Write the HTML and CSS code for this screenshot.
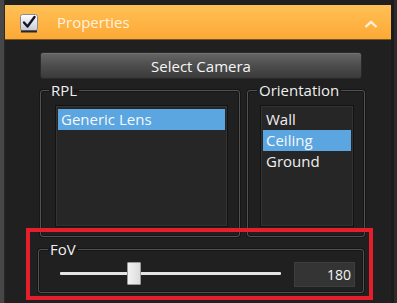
FILE: index.html
```html
<!DOCTYPE html>
<html>
<head>
<meta charset="utf-8">
<link rel="stylesheet" href="styles.css">
</head>
<body>
<div class="root">
  <div class="edge-left"></div>
  <div class="panel">
    <div class="header">
      <svg class="check" width="18" height="19" viewBox="0 0 18 19">
        <defs>
          <linearGradient id="cb" x1="0" y1="0" x2="0" y2="1">
            <stop offset="0" stop-color="#ffffff"/>
            <stop offset="1" stop-color="#c9c9d2"/>
          </linearGradient>
        </defs>
        <rect x="0.5" y="0.5" width="17" height="16" rx="2" fill="url(#cb)" stroke="#8a8a96" stroke-width="1"/>
        <rect x="1" y="16.5" width="16" height="2" fill="#2a2430"/>
        <path d="M4 8.5 L7.5 12.5 L14.5 3" fill="none" stroke="#15142a" stroke-width="2.4" stroke-linecap="round" stroke-linejoin="round"/>
      </svg>
      <span class="title">Properties</span>
      <svg class="chevron" width="14" height="8" viewBox="0 0 14 8">
        <polyline points="1.5,7 7,1.8 12.5,7" fill="none" stroke="rgba(255,255,255,0.8)" stroke-width="2.4" stroke-linejoin="round"/>
      </svg>
    </div>
    <div class="content">
      <button class="btn">Select Camera</button>
      <div class="groups">
        <fieldset class="group rpl">
          <legend>RPL</legend>
          <div class="list">
            <div class="item sel">Generic Lens</div>
          </div>
        </fieldset>
        <fieldset class="group orient">
          <legend>Orientation</legend>
          <div class="list">
            <div class="item">Wall</div>
            <div class="item sel">Ceiling</div>
            <div class="item">Ground</div>
          </div>
        </fieldset>
      </div>
      <fieldset class="group fov">
        <legend>FoV</legend>
        <div class="fov-row">
          <div class="slider">
            <div class="track"></div>
            <div class="thumb"></div>
          </div>
          <div class="value">180</div>
        </div>
      </fieldset>
    </div>
  </div>
  <div class="edge-right"></div>
  <div class="highlight"></div>
</div>
</body>
</html>
```

FILE: styles.css
```css
html, body {
  margin: 0;
  padding: 0;
  background: #1f1f1f;
}

.root {
  position: relative;
  display: flex;
  width: 397px;
  height: 303px;
  overflow: hidden;
  font-family: "Open Sans", "Noto Sans", sans-serif;
  font-size: 15px;
  color: #f0f0f0;
}

.edge-left {
  width: 5px;
  background: linear-gradient(to right, #474747 0, #474747 4px, #2a2a2a 4px);
}

.edge-right {
  flex: 1;
  background: linear-gradient(to right, #1c1c1c 0, #1c1c1c 3px, #2b2b2b 3px);
}

.panel {
  width: 386px;
  padding-top: 5px;
  background: #202020;
  display: flex;
  flex-direction: column;
}

.header {
  height: 34px;
  border-bottom: 1px solid #7d5318;
  background: linear-gradient(to bottom, #ffc156 0%, #ffb445 50%, #fba936 100%);
  display: flex;
  align-items: center;
  padding-left: 15px;
  padding-right: 13px;
}

.check {
  display: block;
  margin-top: 2px;
}

.title {
  flex: 1;
  margin-left: 19px;
  color: rgba(255, 250, 240, 0.9);
  font-size: 15px;
  line-height: 18px;
}

.chevron {
  display: block;
  margin-top: 3px;
}

.content {
  padding-left: 35px;
  display: flex;
  flex-direction: column;
  align-items: flex-start;
}

.btn {
  margin: 12px 0 0 0;
  width: 322px;
  height: 27px;
  border: 1px solid #2a2a2a;
  border-radius: 3px;
  background: linear-gradient(to bottom, #666666 0%, #4d4d4d 50%, #3a3a3a 100%);
  box-shadow: inset 0 1px 0 #727272;
  color: #f6f6f6;
  font-family: "Open Sans", "Noto Sans", sans-serif;
  font-size: 15px;
  line-height: 20px;
  padding: 0;
}

.groups {
  display: flex;
  gap: 7px;
  margin-top: 3px;
}

.group {
  box-sizing: border-box;
  margin: 0;
  min-width: 0;
  border: 1px solid #525252;
  border-radius: 3px;
  box-shadow: inset 0 0 0 1px #161616, 0 0 0 1px #161616;
}

.group legend {
  font-size: 15px;
  line-height: 16px;
  padding: 0 2px;
  color: #f0f0f0;
}

.rpl {
  width: 200px;
  height: 155px;
  padding: 7px 11px 0 14px;
}

.rpl legend {
  margin-left: -6px;
}

.orient {
  width: 118px;
  height: 155px;
  padding: 7px 10px 0 12px;
}

.orient legend {
  margin-left: -3px;
}

.list {
  box-sizing: border-box;
  height: 122px;
  border: 1px solid #121212;
  background: #262626;
  box-shadow: inset 0 0 0 1px #333333;
  padding: 3px 2px;
}

.item {
  height: 21px;
  line-height: 21px;
  padding-left: 3px;
  white-space: nowrap;
}

.item.sel {
  background: #5ba5e0;
  color: #f6f9fc;
}

.fov {
  width: 326px;
  height: 52px;
  margin-top: 4px;
  margin-left: -2px;
  padding: 5px 0 0 21px;
}

.fov legend {
  margin-left: -12px;
}

.fov-row {
  display: flex;
  align-items: flex-start;
  gap: 13px;
}

.slider {
  position: relative;
  width: 221px;
  height: 23px;
  display: flex;
  align-items: center;
}

.track {
  width: 100%;
  height: 3px;
  background: #e4e4e4;
  border-radius: 1px;
}

.thumb {
  position: absolute;
  left: 67px;
  top: 0;
  box-sizing: border-box;
  width: 14px;
  height: 23px;
  background: linear-gradient(to right, #f2f2f2, #dcdcdc);
  border: 1px solid #9a9a9a;
  border-radius: 1px;
}

.value {
  box-sizing: border-box;
  width: 61px;
  height: 25px;
  background: #343434;
  border: 1px solid #3e3e3e;
  text-align: right;
  padding-right: 3px;
  font-size: 14px;
  line-height: 23px;
  color: #f4f4f4;
}

.highlight {
  position: absolute;
  left: 26px;
  top: 228px;
  width: 347px;
  height: 72px;
  box-sizing: border-box;
  border: 4px solid #e41e2b;
  pointer-events: none;
}
```
